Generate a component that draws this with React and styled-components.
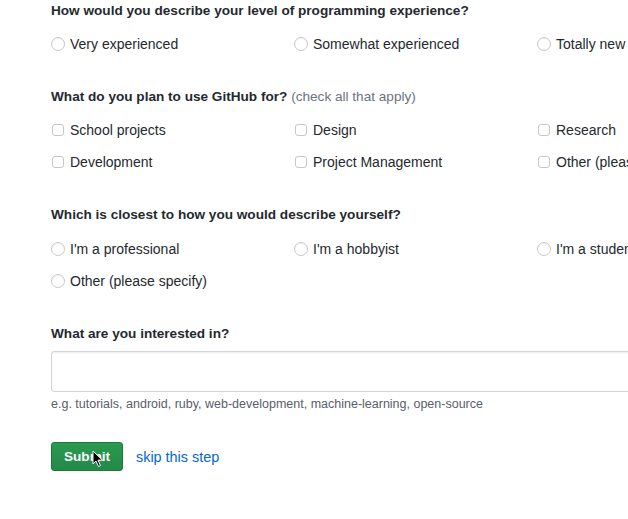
import styled, { createGlobalStyle } from "styled-components";

const Global = createGlobalStyle`
    html, body {
        margin: 0;
        background: #fff;
        overflow: hidden;
    }
    body {
        font-family: "Liberation Sans", Arial, sans-serif;
        color: #24292e;
    }
`

const Page = styled.form`
    width: 760px;
    padding: 1px 0 0 51px;
`

const Section = styled.div`
    margin-bottom: 33px;
`

const Question = styled.h3`
    margin: 0 0 ${({$gap}) => $gap ?? 13}px 0;
    font-size: 13.6px;
    line-height: 20px;
    font-weight: bold;
    span {
        font-weight: normal;
        color: #6a737d;
    }
`

const Options = styled.div`
    display: grid;
    grid-template-columns: repeat(3, 243px);
    row-gap: 12px;
`

const Option = styled.label`
    display: flex;
    align-items: center;
    height: 20px;
    font-size: 14px;
    white-space: nowrap;
`

const Radio = styled.span`
    box-sizing: border-box;
    width: 14px;
    height: 14px;
    margin-right: 5px;
    border: 1px solid #c8c8c8;
    border-radius: 50%;
    background: #fff;
    box-shadow: inset 0 1px 1px rgba(0,0,0,0.06);
`

const Check = styled.span`
    box-sizing: border-box;
    width: 12px;
    height: 12px;
    margin: 0 6px 0 1px;
    border: 1px solid #c8c8c8;
    border-radius: 3px;
    background: #fff;
`

const TextInput = styled.div`
    box-sizing: border-box;
    height: 41px;
    width: 700px;
    margin-top: 7px;
    border: 1px solid #d1d5da;
    border-radius: 3px;
    box-shadow: inset 0 1px 2px rgba(27,31,35,0.075);
`

const Hint = styled.p`
    margin: 4px 0 0 0;
    font-size: 12.5px;
    line-height: 16px;
    color: #586069;
`

const Actions = styled.div`
    position: relative;
    display: flex;
    align-items: center;
    gap: 13px;
    margin-top: 30px;
`

const Submit = styled.button`
    box-sizing: border-box;
    width: 72px;
    height: 29px;
    border: 1px solid #1b7a3a;
    border-radius: 3px;
    background: linear-gradient(#2a9a4f, #24894a);
    color: #fff;
    font-family: inherit;
    font-size: 13.6px;
    font-weight: bold;
`

const Skip = styled.a`
    color: #0366d6;
    font-size: 14.4px;
    text-decoration: none;
`

const Cursor = styled.svg`
    position: absolute;
    left: 41px;
    top: 8px;
`

const radios = (items) => items.map(t => (
    <Option key={t}><Radio />{t}</Option>
))

const checks = (items) => items.map(t => (
    <Option key={t}><Check />{t}</Option>
))

export default function App() {
    return (
        <>
            <Global />
            <Page>
                <Section>
                    <Question>How would you describe your level of programming experience?</Question>
                    <Options>
                        {radios(["Very experienced", "Somewhat experienced", "Totally new to programming"])}
                    </Options>
                </Section>
                <Section>
                    <Question>What do you plan to use GitHub for? <span>(check all that apply)</span></Question>
                    <Options>
                        {checks(["School projects", "Design", "Research", "Development", "Project Management", "Other (please specify)"])}
                    </Options>
                </Section>
                <Section>
                    <Question $gap={14}>Which is closest to how you would describe yourself?</Question>
                    <Options>
                        {radios(["I'm a professional", "I'm a hobbyist", "I'm a student", "Other (please specify)"])}
                    </Options>
                </Section>
                <div>
                    <Question $gap={0}>What are you interested in?</Question>
                    <TextInput />
                    <Hint>e.g. tutorials, android, ruby, web-development, machine-learning, open-source</Hint>
                </div>
                <Actions>
                    <Submit type="button">Submit</Submit>
                    <Skip href="#">skip this step</Skip>
                    <Cursor width="12" height="18" viewBox="0 0 12 18">
                        <path d="M1 1 L1 14 L4 11 L6.5 16.5 L8.5 15.6 L6 10.2 L10.5 10.2 Z" fill="#000" stroke="#fff" strokeWidth="1" />
                    </Cursor>
                </Actions>
            </Page>
        </>
    )
}
